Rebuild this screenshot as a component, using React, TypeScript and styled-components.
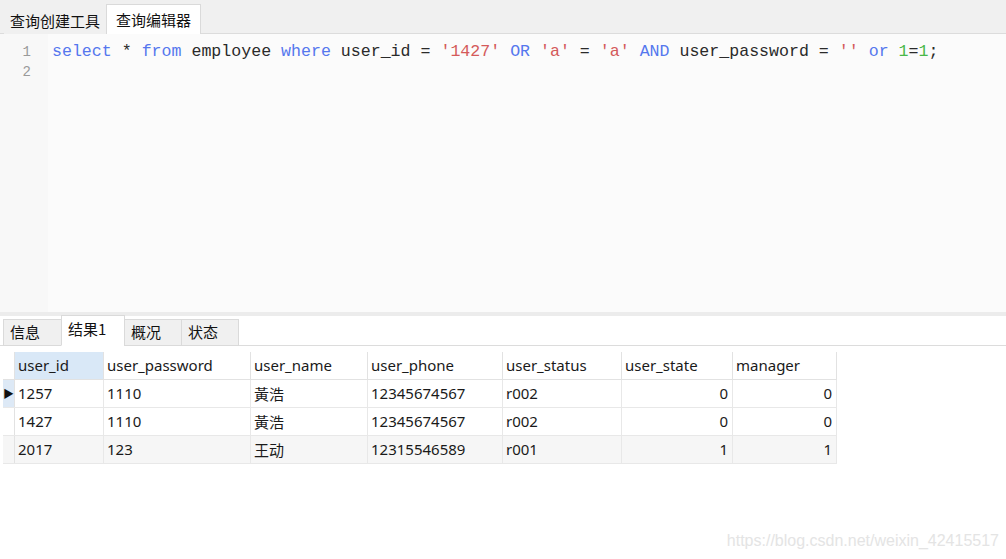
import React from "react";
import styled, { createGlobalStyle } from "styled-components";

const Global = createGlobalStyle`
  html, body { margin: 0; padding: 0; background: #ffffff; }
  body { width: 1006px; height: 559px; overflow: hidden; }
`;

const Page = styled.div`
  position: relative;
  width: 1006px;
  height: 559px;
  display: flex;
  flex-direction: column;
  background: #ffffff;
  font-family: "Noto Sans", "Noto Sans CJK SC", sans-serif;
  color: #222;
`;

const TopBar = styled.div`
  height: 33px;
  background: #f0f0f0;
  border-bottom: 1px solid #dcdcdc;
  display: flex;
  align-items: flex-end;
  padding-left: 4px;
  box-sizing: content-box;
`;

const TopTab = styled.div<{ $active?: boolean }>`
  height: 30px;
  padding: 0 ${(p) => (p.$active ? "9px" : "5px")};
  margin-bottom: -1px;
  padding-top: ${(p) => (p.$active ? "0" : "2px")};
  display: flex;
  align-items: center;
  font-size: 15px;
  font-family: "Noto Sans CJK SC", sans-serif;
  color: #111;
  background: ${(p) => (p.$active ? "#ffffff" : "#f0f0f0")};
  border: 1px solid ${(p) => (p.$active ? "#dadada" : "transparent")};
  border-bottom: none;
  box-sizing: border-box;
`;

const Editor = styled.div`
  height: 278px;
  display: flex;
  background: #fbfbfb;
`;

const Gutter = styled.div`
  width: 48px;
  padding-top: 8px;
  display: flex;
  flex-direction: column;
  align-items: flex-end;
  padding-right: 17px;
  box-sizing: border-box;
  background: #f8f8f8;
`;

const LineNo = styled.div`
  height: 20px;
  line-height: 20px;
  font-family: "Liberation Mono", monospace;
  font-size: 14px;
  color: #9a9a9a;
`;

const Code = styled.div`
  padding-top: 8px;
  padding-left: 4px;
  font-family: "Liberation Mono", monospace;
  font-size: 16.6px;
  line-height: 20px;
  white-space: pre;
  color: #2a2a2a;
`;

const Kw = styled.span`
  color: #5577ee;
`;
const Str = styled.span`
  color: #d45a5a;
`;
const Num = styled.span`
  color: #48b848;
`;

const Splitter = styled.div`
  height: 4px;
  background: #ececec;
`;

const ResultBar = styled.div`
  height: 29px;
  display: flex;
  align-items: flex-end;
  padding-left: 3px;
  border-bottom: 1px solid #dcdcdc;
  background: #ffffff;
  box-sizing: content-box;
`;

const ResultTab = styled.div<{ $active?: boolean; $w: number }>`
  width: ${(p) => p.$w}px;
  height: ${(p) => (p.$active ? "31px" : "27px")};
  margin-bottom: -1px;
  padding-left: 6px;
  padding-bottom: ${(p) => (p.$active ? "4px" : "2px")};
  display: flex;
  align-items: center;
  box-sizing: border-box;
  font-size: 15px;
  font-family: "Noto Sans CJK SC", sans-serif;
  color: #111;
  background: ${(p) => (p.$active ? "#ffffff" : "#f0f0f0")};
  border: 1px solid #dadada;
  border-bottom: ${(p) => (p.$active ? "1px solid #ffffff" : "1px solid #dadada")};
  margin-right: -1px;
`;

const GridWrap = styled.div`
  padding: 6px 0 0 3px;
`;

const Table = styled.table`
  border-collapse: collapse;
  table-layout: fixed;
  font-family: "Noto Sans", "Noto Sans CJK SC", sans-serif;
  font-size: 15px;
  color: #1a1a1a;
`;

const Th = styled.th<{ $sel?: boolean; $w: number }>`
  width: ${(p) => p.$w}px;
  height: 27px;
  padding: 0 3px;
  font-weight: normal;
  text-align: left;
  background: ${(p) => (p.$sel ? "#d9e8f7" : "#ffffff")};
  border-right: 1px solid #e2e2e2;
  border-bottom: 1px solid #e2e2e2;
  box-sizing: border-box;
  overflow: hidden;
  white-space: nowrap;
`;

const Row = styled.tr<{ $alt?: boolean }>`
  background: ${(p) => (p.$alt ? "#f6f6f6" : "#ffffff")};
`;

const Td = styled.td<{ $num?: boolean }>`
  height: 27px;
  padding: 0 4px 0 3px;
  text-align: ${(p) => (p.$num ? "right" : "left")};
  border-right: 1px solid #e8e8e8;
  border-bottom: 1px solid #e8e8e8;
  box-sizing: border-box;
  white-space: nowrap;
  font-family: "Noto Sans", "Noto Sans CJK SC", sans-serif;
`;

const Indicator = styled.td<{ $sel?: boolean }>`
  width: 11px;
  padding: 0;
  height: 27px;
  background: ${(p) => (p.$sel ? "#dde9f6" : "transparent")};
  border-right: 1px solid #e2e2e2;
  border-bottom: 1px solid #e8e8e8;
  font-size: 11px;
  color: #111;
  text-align: center;
  overflow: hidden;
`;

const IndicatorHead = styled.th`
  width: 11px;
  padding: 0;
  border-right: 1px solid #e2e2e2;
  border-bottom: 1px solid #e2e2e2;
`;

const Watermark = styled.div`
  position: absolute;
  right: 7px;
  bottom: 9px;
  font-family: "Liberation Sans", Arial, sans-serif;
  font-size: 16px;
  color: #e4e4e4;
`;

const cols: { name: string; w: number; num?: boolean }[] = [
  { name: "user_id", w: 89 },
  { name: "user_password", w: 147 },
  { name: "user_name", w: 117 },
  { name: "user_phone", w: 135 },
  { name: "user_status", w: 119 },
  { name: "user_state", w: 111, num: true },
  { name: "manager", w: 104, num: true },
];

const rows = [
  ["1257", "1110", "黃浩", "12345674567", "r002", "0", "0"],
  ["1427", "1110", "黃浩", "12345674567", "r002", "0", "0"],
  ["2017", "123", "王动", "12315546589", "r001", "1", "1"],
];

export default function App() {
  return (
    <Page>
      <Global />
      <TopBar>
        <TopTab>查询创建工具</TopTab>
        <TopTab $active>查询编辑器</TopTab>
      </TopBar>
      <Editor>
        <Gutter>
          <LineNo>1</LineNo>
          <LineNo>2</LineNo>
        </Gutter>
        <Code>
          <Kw>select</Kw> * <Kw>from</Kw> employee <Kw>where</Kw> user_id ={" "}
          <Str>'1427'</Str> <Kw>OR</Kw> <Str>'a'</Str> = <Str>'a'</Str>{" "}
          <Kw>AND</Kw> user_password = <Str>''</Str> <Kw>or</Kw> <Num>1</Num>=
          <Num>1</Num>;
        </Code>
      </Editor>
      <Splitter />
      <ResultBar>
        <ResultTab $w={59}>信息</ResultTab>
        <ResultTab $w={64} $active>
          结果1
        </ResultTab>
        <ResultTab $w={58}>概况</ResultTab>
        <ResultTab $w={58}>状态</ResultTab>
      </ResultBar>
      <GridWrap>
        <Table>
          <thead>
            <tr>
              <IndicatorHead />
              {cols.map((c, i) => (
                <Th key={c.name} $w={c.w} $sel={i === 0}>
                  {c.name}
                </Th>
              ))}
            </tr>
          </thead>
          <tbody>
            {rows.map((r, ri) => (
              <Row key={ri} $alt={ri === 2}>
                <Indicator $sel={ri === 0}>{ri === 0 ? "▶" : ""}</Indicator>
                {r.map((v, ci) => (
                  <Td key={ci} $num={cols[ci].num}>
                    {v}
                  </Td>
                ))}
              </Row>
            ))}
          </tbody>
        </Table>
      </GridWrap>
      <Watermark>https://blog.csdn.net/weixin_42415517</Watermark>
    </Page>
  );
}
